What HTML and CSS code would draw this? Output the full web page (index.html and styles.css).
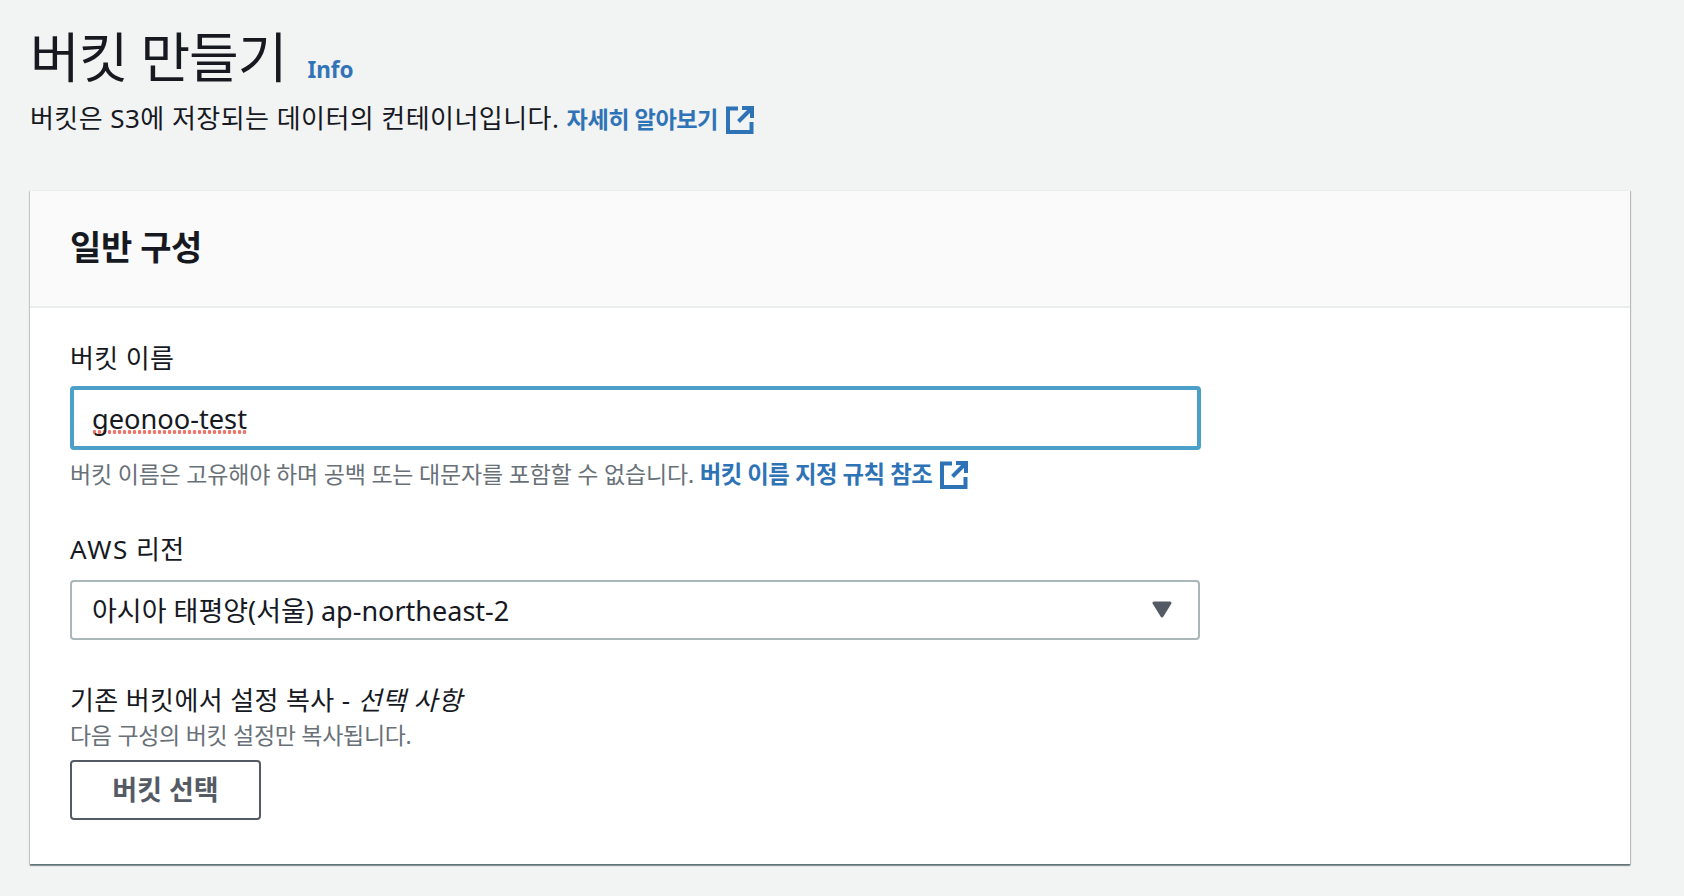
FILE: index.html
```html
<!DOCTYPE html>
<html lang="ko">
<head>
  <meta charset="UTF-8" />
  <meta name="viewport" content="width=device-width, initial-scale=1" />
  <title>버킷 만들기</title>
  <link rel="stylesheet" href="styles.css">
</head>
<body>
  <div class="page-head">
    <div class="title-row">
      <h1 class="page-title">버킷 만들기</h1>
      <a href="#" class="info-link">Info</a>
    </div>
    <p class="page-desc">
      버킷은 S3에 저장되는 데이터의 컨테이너입니다.
      <a href="#" class="link">자세히 알아보기<svg class="ext-icon" viewBox="0 0 28 28"><path d="M12 2.5H2V26H25.5V16M16 2H26V12M25.5 2.5L12.5 15.5" fill="none" stroke="currentColor" stroke-width="4"/></svg></a>
    </p>
  </div>

  <section class="card">
    <div class="card-header">
      <h2 class="card-title">일반 구성</h2>
    </div>
    <div class="card-body">
      <div class="field field-name">
        <label class="field-label" for="bucketName">버킷 이름</label>
        <div class="text-input" id="bucketName"><span class="spell-error">geonoo-test</span></div>
        <div class="field-help">
          버킷 이름은 고유해야 하며 공백 또는 대문자를 포함할 수 없습니다.
          <a href="#" class="link">버킷 이름 지정 규칙 참조<svg class="ext-icon" viewBox="0 0 28 28"><path d="M12 2.5H2V26H25.5V16M16 2H26V12M25.5 2.5L12.5 15.5" fill="none" stroke="currentColor" stroke-width="4"/></svg></a>
        </div>
      </div>

      <div class="field field-region">
        <div class="field-label"><span class="aws">AWS</span> 리전</div>
        <div class="select-box">
          <span>아시아 태평양(서울) ap-northeast-2</span>
          <svg class="caret" viewBox="0 0 20 17"><path d="M2 2H18L10 15Z" fill="#545b64" stroke="#545b64" stroke-width="3" stroke-linejoin="round"/></svg>
        </div>
      </div>

      <div class="field">
        <div class="field-label">기존 버킷에서 설정 복사 - <i>선택 사항</i></div>
        <div class="field-desc">다음 구성의 버킷 설정만 복사됩니다.</div>
        <button type="button" class="btn">버킷 선택</button>
      </div>
    </div>
  </section>
</body>
</html>
```

FILE: styles.css
```css
* {
  box-sizing: border-box;
}

body {
  margin: 0;
  padding: 0 54px 0 30px;
  min-height: 100vh;
  background: #f2f3f3;
  color: #16191f;
  font-family: "Noto Sans", "Noto Sans CJK KR", sans-serif;
}

.page-head {
  height: 190px;
  padding-top: 19px;
}

.title-row {
  display: flex;
  align-items: baseline;
  gap: 21px;
}

.page-title {
  margin: 0;
  font-size: 54px;
  line-height: 76px;
  font-weight: 400;
  letter-spacing: -1px;
}

.info-link {
  color: #3274b8;
  font-size: 22.5px;
  font-weight: 700;
  text-decoration: none;
}

.page-desc {
  margin: 5px 0 0;
  font-size: 26px;
  line-height: 36px;
  letter-spacing: 0.45px;
}

.link {
  color: #2f73b7;
  font-weight: 700;
  font-size: 23.2px;
  letter-spacing: -0.5px;
  text-decoration: none;
}

.ext-icon {
  width: 28px;
  height: 28px;
  margin-left: 8px;
  vertical-align: -6px;
}

.card {
  background: #fff;
  box-shadow: 0 2px 1px 0 rgba(0, 28, 36, 0.4), 1px 1px 1px 0 rgba(0, 28, 36, 0.2), -1px 1px 1px 0 rgba(0, 28, 36, 0.15);
  border-top: 1px solid #eaeded;
}

.card-header {
  height: 117px;
  padding: 0 40px;
  display: flex;
  align-items: center;
  background: #fafafa;
  border-bottom: 2px solid #eaeded;
}

.card-title {
  margin: 0 0 6px;
  font-size: 34px;
  font-weight: 700;
  letter-spacing: -0.4px;
}

.card-body {
  padding: 32px 40px 44px;
}

.field-name {
  margin-bottom: 39px;
}

.field-region {
  margin-bottom: 42px;
}

.field-label {
  display: block;
  font-size: 26px;
  line-height: 36px;
  letter-spacing: 0.4px;
}

.field-label i {
  font-style: italic;
}

.aws {
  letter-spacing: 1.6px;
}

.text-input {
  display: flex;
  align-items: center;
  width: 1131px;
  height: 64px;
  margin-top: 10px;
  padding: 2px 18px 0;
  border: 4px solid #4b9fc8;
  border-radius: 4px;
  background: #fff;
  font-size: 27.2px;
}

/* browser spellcheck dots under the typed value */
.spell-error {
  line-height: 30px;
  background: radial-gradient(circle at 2.5px 2px, #f0736a 1.7px, transparent 2.1px) left bottom / 5px 4px repeat-x;
}

.field-help {
  margin-top: 6px;
  color: #687078;
  font-size: 23px;
  line-height: 36px;
  letter-spacing: -0.2px;
}

.field-help .link {
  font-size: 23.4px;
}

.select-box {
  display: flex;
  align-items: center;
  justify-content: space-between;
  width: 1130px;
  height: 60px;
  margin-top: 13px;
  padding: 0 26px 2px 20px;
  border: 2px solid #aab7b8;
  border-radius: 4px;
  font-size: 27px;
}

.caret {
  width: 20px;
  height: 17px;
}

.field-desc {
  color: #687078;
  font-size: 23px;
  line-height: 34px;
  letter-spacing: -0.3px;
}

.btn {
  display: block;
  width: 191px;
  height: 60px;
  margin-top: 8px;
  padding: 0 0 3px;
  background: #fff;
  border: 2px solid #545b64;
  border-radius: 4px;
  color: #545b64;
  font-family: inherit;
  font-size: 27px;
  font-weight: 700;
}
```
